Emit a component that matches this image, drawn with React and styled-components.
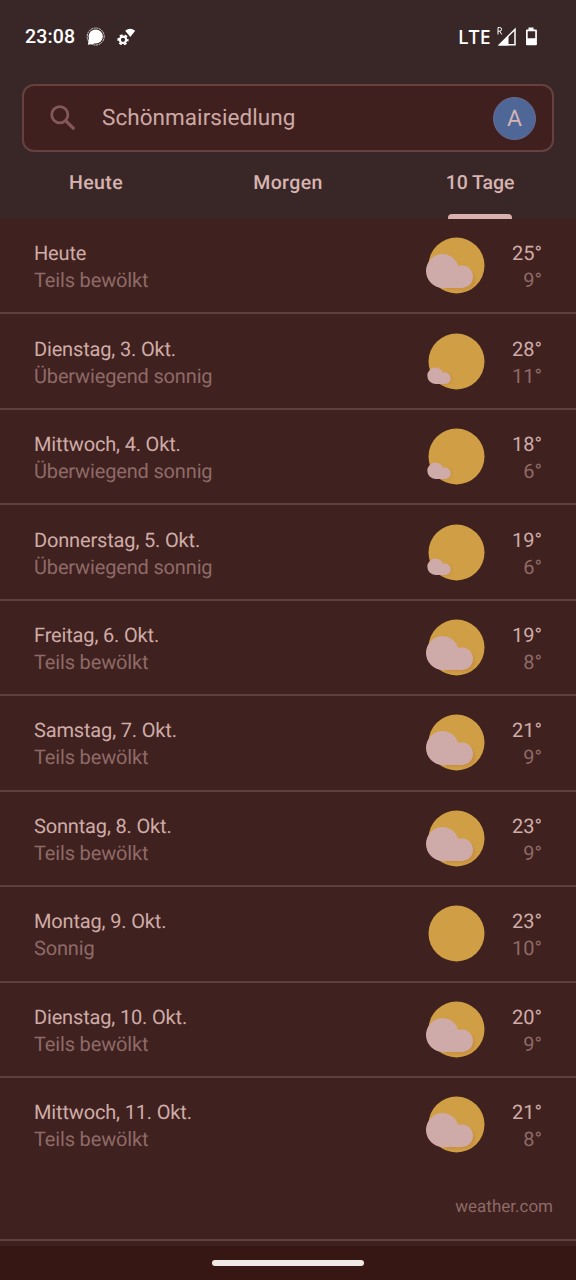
import React, { useId } from 'react'
import styled, { createGlobalStyle } from 'styled-components'

const GlobalStyle = createGlobalStyle`
  * {
    box-sizing: border-box;
  }

  body {
    margin: 0;
    background: #3f211f;
    text-rendering: geometricPrecision;
  }
`

const Screen = styled.div`
  display: flex;
  flex-direction: column;
  width: 576px;
  height: 1280px;
  overflow: hidden;
  background: #3f211f;
  color: #d7b4b0;
  font-family: Roboto, sans-serif;
`

const Header = styled.header`
  height: 219px;
  flex: none;
  display: flex;
  flex-direction: column;
  background: #392728;
`

const StatusBar = styled.div`
  display: flex;
  justify-content: space-between;
  align-items: center;
  height: 72px;
  padding: 2px 38px 0 25px;
  color: #fff;
`

const StatusGroup = styled.div`
  display: flex;
  align-items: center;
`

const Clock = styled.span`
  width: 61px;
  font-size: 19.5px;
  font-weight: 500;
  line-height: 26px;
  letter-spacing: 0.15px;
`

const Network = styled.span`
  margin-right: 5px;
  font-family: 'Noto Sans', sans-serif;
  font-size: 19.5px;
  font-weight: 500;
  line-height: 24px;
  padding-bottom: 1px;
  letter-spacing: 0.4px;
`

const SearchBar = styled.div`
  display: flex;
  align-items: center;
  height: 68px;
  margin: 12px 22px 0;
  padding: 0 16px 0 26px;
  border: 2px solid #65413f;
  border-radius: 12px;
  background: #3f201e;
`

const Place = styled.span`
  flex: 1;
  margin-left: 26px;
  font-size: 22.5px;
  line-height: 30px;
  letter-spacing: 0.05px;
  color: #cda9a5;
`

const Avatar = styled.div`
  width: 43px;
  height: 43px;
  border: 1px solid #6a6a92;
  border-radius: 50%;
  background: #4f6796;
  color: #d3b4b5;
  font-size: 23px;
  line-height: 42px;
  text-align: center;
`

const Tabs = styled.nav`
  flex: 1;
  display: grid;
  grid-template-columns: repeat(3, 1fr);
`

const Tab = styled.div`
  display: flex;
  flex-direction: column;
  justify-content: space-between;
  align-items: center;
  padding-top: 18px;
  font-size: 19.5px;
  font-weight: 500;
  line-height: 26px;
  letter-spacing: ${({ $active }) => ($active ? '-0.1px' : '0.4px')};
  color: #d7b4b0;

  &::after {
    content: '';
    width: 64px;
    height: 5px;
    border-radius: 4px 4px 0 0;
    background: ${({ $active }) => ($active ? '#d9b1ac' : 'transparent')};
  }
`

const Forecast = styled.main`
  flex: none;
`

const DayRow = styled.div`
  display: flex;
  align-items: flex-start;
  height: 95.45px;
  padding: 21.3px 34px 0 34px;
  border-bottom: ${({ $last }) => ($last ? 'none' : '2px solid #60403e')};
`

const DayText = styled.div`
  flex: 1;
  font-size: 20px;
  line-height: 27px;
  letter-spacing: -0.16px;
`

const Primary = styled.div`
  color: #cfaca7;
`

const Secondary = styled.div`
  color: #8e6a67;
`

const WeatherSvg = styled.svg`
  flex: none;
  display: block;
  margin-top: -5px;
`

const Temperatures = styled.div`
  width: 54px;
  font-size: 20px;
  line-height: 27px;
  text-align: right;
`

const Source = styled.div`
  height: 67.5px;
  padding: 22px 23px 0 0;
  border-bottom: 2px solid #60403e;
  font-size: 17px;
  line-height: 24px;
  text-align: right;
  color: #8e6a67;
`

const NavigationBar = styled.footer`
  flex: 1;
  display: flex;
  justify-content: center;
  align-items: center;
  margin-top: 5px;
  background: #371713;
`

const HomeHandle = styled.div`
  width: 152px;
  height: 6px;
  border-radius: 3px;
  background: #f0e9e6;
`

const days = [
  { name: 'Heute', text: 'Teils bewölkt', cloud: 'big', high: 25, low: 9 },
  { name: 'Dienstag, 3. Okt.', text: 'Überwiegend sonnig', cloud: 'small', high: 28, low: 11 },
  { name: 'Mittwoch, 4. Okt.', text: 'Überwiegend sonnig', cloud: 'small', high: 18, low: 6 },
  { name: 'Donnerstag, 5. Okt.', text: 'Überwiegend sonnig', cloud: 'small', high: 19, low: 6 },
  { name: 'Freitag, 6. Okt.', text: 'Teils bewölkt', cloud: 'big', high: 19, low: 8 },
  { name: 'Samstag, 7. Okt.', text: 'Teils bewölkt', cloud: 'big', high: 21, low: 9 },
  { name: 'Sonntag, 8. Okt.', text: 'Teils bewölkt', cloud: 'big', high: 23, low: 9 },
  { name: 'Montag, 9. Okt.', text: 'Sonnig', high: 23, low: 10 },
  { name: 'Dienstag, 10. Okt.', text: 'Teils bewölkt', cloud: 'big', high: 20, low: 9 },
  { name: 'Mittwoch, 11. Okt.', text: 'Teils bewölkt', cloud: 'big', high: 21, low: 8 },
]

// Each cloud is two puffs with a flat base between them
const clouds = {
  big: {
    shape: 'M19 19a17 17 0 0 1 15.4 11.9A11.3 11.3 0 1 1 38 53H19a17 17 0 0 1 0-34Z',
    shadow: 'M47 35q7 8 3 15-3 5-11 5H22V45Z',
  },
  small: {
    shape: 'M11.5 36.6a8.2 8.2 0 0 1 7.4 5.2A5.8 5.8 0 1 1 21 53H11.5a8.2 8.2 0 0 1 0-16.4Z',
    shadow: 'M22 42q5 0 6 4 1 6-6 8h-9V46Z',
  },
}

function WeatherIcon({ cloud }) {
  const id = useId()
  const parts = clouds[cloud]

  return (
    <WeatherSvg width="64" height="62" viewBox="0 0 64 62">
      <defs>
        <clipPath id={`${id}-sun`}>
          <circle cx="32.5" cy="30.5" r="28" />
        </clipPath>
        <filter id={`${id}-soft`}>
          <feGaussianBlur stdDeviation="1.2" />
        </filter>
      </defs>
      <circle cx="32.5" cy="30.5" r="28" fill="#d09e45" />
      {parts && (
        <>
          <g clipPath={`url(#${id}-sun)`}>
            <path d={parts.shadow} fill="#c8913f" filter={`url(#${id}-soft)`} />
          </g>
          <path d={parts.shape} fill="#ceaba8" />
        </>
      )}
    </WeatherSvg>
  )
}

function StatusIcons() {
  return (
    <svg width="50" height="22" viewBox="0 0 50 22">
      <circle cx="9.7" cy="10.5" r="7.1" fill="#fff" />
      <path d="m2.9 12-1 6.700 6.700-1Z" fill="#fff" />
      <circle cx="9.7" cy="10.5" r="8.5" fill="none" stroke="#fff" strokeWidth=".8" strokeDasharray="2 .7" />
      <circle cx="37" cy="13.8" r="3.2" fill="none" stroke="#fff" strokeWidth="2.2" />
      <circle cx="37" cy="13.8" r="4.7" fill="none" stroke="#fff" strokeWidth="1.8" strokeDasharray="2.8 2.12" strokeDashoffset="1.4" />
      <path d="M39.2 4.7q4.9-3.7 10 0L44.3 11Z" fill="#fff" />
    </svg>
  )
}

function SignalIcons() {
  return (
    <svg width="42" height="22" viewBox="0 0 42 22">
      <path d="M2 8.500V1.500h1.600q2 0 2 1.800T3.600 5.100H2m1.700 0L5.800 8.500" fill="none" stroke="#fff" strokeWidth="1" />
      <path d="M19 3.3V18.800H3.500Z" fill="none" stroke="#fff" strokeWidth="1.5" />
      <path d="M2.500 19.500 12.500 9.800v9.700Z" fill="#fff" />
      <path d="M32.500 1.500h5v2H40a.9.9 0 0 1 .9.9v13.900a.9.9 0 0 1-.9.9h-9.100a.9.9 0 0 1-.9-.9V4.400a.9.9 0 0 1 .9-.9h1.600ZM31.700 5.200v7h7.500v-7Z" fill="#fff" fillRule="evenodd" />
    </svg>
  )
}

function SearchIcon() {
  return (
    <svg width="26" height="26" viewBox="0 0 26 26">
      <circle cx="9.8" cy="9.8" r="8.1" fill="none" stroke="#82585a" strokeWidth="2.8" />
      <path d="m15.6 15.6 8.6 8.6" stroke="#82585a" strokeWidth="3.2" />
    </svg>
  )
}

function Day({ day, last }) {
  return (
    <DayRow $last={last}>
      <DayText>
        <Primary>{day.name}</Primary>
        <Secondary>{day.text}</Secondary>
      </DayText>
      <WeatherIcon cloud={day.cloud} />
      <Temperatures>
        <Primary>{`${day.high}°`}</Primary>
        <Secondary>{`${day.low}°`}</Secondary>
      </Temperatures>
    </DayRow>
  )
}

function App() {
  return (
    <>
      <GlobalStyle />
      <Screen>
        <Header>
          <StatusBar>
            <StatusGroup>
              <Clock>23:08</Clock>
              <StatusIcons />
            </StatusGroup>
            <StatusGroup>
              <Network>LTE</Network>
              <SignalIcons />
            </StatusGroup>
          </StatusBar>
          <SearchBar>
            <SearchIcon />
            <Place>Schönmairsiedlung</Place>
            <Avatar>A</Avatar>
          </SearchBar>
          <Tabs>
            <Tab>Heute</Tab>
            <Tab>Morgen</Tab>
            <Tab $active>10 Tage</Tab>
          </Tabs>
        </Header>
        <Forecast>
          {days.map((day, index) => (
            <Day day={day} key={day.name} last={index === days.length - 1} />
          ))}
          <Source>weather.com</Source>
        </Forecast>
        <NavigationBar>
          <HomeHandle />
        </NavigationBar>
      </Screen>
    </>
  )
}

export default App
